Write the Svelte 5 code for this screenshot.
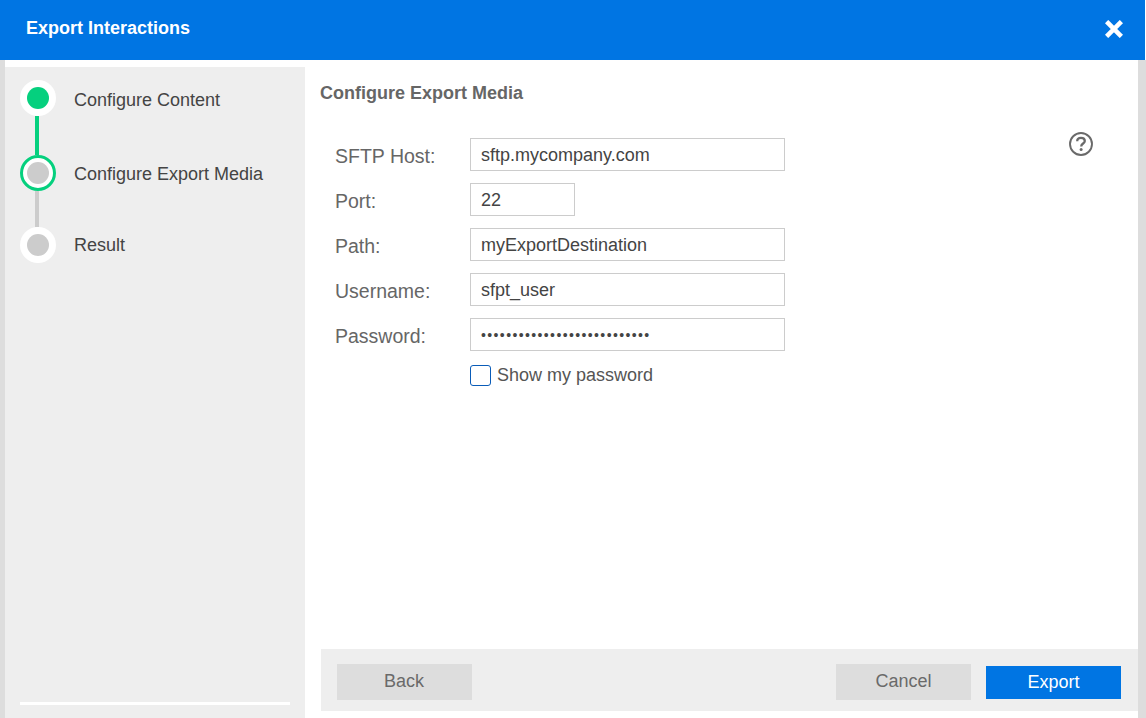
<script>
  const fields = [
    { label: 'SFTP Host:', value: 'sftp.mycompany.com', type: 'text' },
    { label: 'Port:', value: '22', type: 'text', short: true },
    { label: 'Path:', value: 'myExportDestination', type: 'text' },
    { label: 'Username:', value: 'sfpt_user', type: 'text' },
    { label: 'Password:', value: '•••••••••••••••••••••••••••', type: 'text', pw: true }
  ];
</script>

<div class="dialog">
  <header class="head">
    <h1>Export Interactions</h1>
    <svg class="close" width="18" height="18" viewBox="0 0 18 18" aria-label="Close">
      <path d="M3.2 3.2 L14.8 14.8 M14.8 3.2 L3.2 14.8" stroke="#fff" stroke-width="4.6" stroke-linecap="square" fill="none" />
    </svg>
  </header>
  <div class="body">
    <aside class="side">
      <ol class="steps">
        <li class="step">
          <span class="dot done"><i></i></span>
          <span class="name">Configure Content</span>
          <span class="line green"></span>
        </li>
        <li class="step">
          <span class="dot current"><i></i></span>
          <span class="name">Configure Export Media</span>
          <span class="line"></span>
        </li>
        <li class="step">
          <span class="dot"><i></i></span>
          <span class="name">Result</span>
        </li>
      </ol>
      <div class="rule"></div>
    </aside>
    <main class="main">
      <div class="content">
        <h2>Configure Export Media</h2>
        <div class="formwrap">
          <form class="form">
            {#each fields as f}
              <div class="row">
                <label for={f.label}>{f.label}</label>
                <input id={f.label} class:short={f.short} class:pw={f.pw} type={f.type} value={f.value} />
              </div>
            {/each}
            <label class="check"><span class="box"></span>Show my password</label>
          </form>
          <svg class="help" width="26" height="26" viewBox="0 0 26 26" aria-label="Help">
            <circle cx="13" cy="13" r="11" fill="none" stroke="#6a6a6a" stroke-width="1.9" />
            <path d="M9.2 10.2 C9.2 7.8 11 6.8 13 6.8 C15.2 6.8 16.8 8 16.8 10 C16.8 12.4 13.2 12.6 13.2 15.4" fill="none" stroke="#6a6a6a" stroke-width="2.3" />
            <circle cx="13.1" cy="18.6" r="1.5" fill="#6a6a6a" />
          </svg>
        </div>
      </div>
      <footer class="foot">
        <button class="btn back" type="button">Back</button>
        <div class="right">
          <button class="btn" type="button">Cancel</button>
          <button class="btn primary" type="button">Export</button>
        </div>
      </footer>
    </main>
  </div>
</div>

<style>
  :global(body) { margin: 0; background: #fff; }
  .dialog {
    width: 1146px; height: 718px; overflow: hidden; display: flex; flex-direction: column;
    font-family: "Liberation Sans", Arial, sans-serif; color: #444;
  }
  .head {
    height: 60px; width: 1145px; flex: none; background: #0075e3; color: #fff;
    display: flex; align-items: center; justify-content: space-between;
    padding: 0 22px 0 26px; box-sizing: border-box;
  }
  h1 { margin: 0 0 4px; font-size: 18px; font-weight: 700; }
  .close { margin-bottom: 3px; }
  .body {
    flex: 1; min-height: 0; display: flex; box-sizing: border-box;
    border-left: 5px solid #ddd; border-right: 8px solid #ddd; padding-top: 7px;
  }
  .side {
    width: 300px; flex: none; background: #eee; box-sizing: border-box;
    padding: 13px 15px 13px; display: flex; flex-direction: column; justify-content: space-between;
  }
  .steps { list-style: none; margin: 0; padding: 0; }
  .step { position: relative; height: 75px; display: flex; align-items: flex-start; }
  .step:nth-child(2) { height: 72px; }
  .dot {
    width: 36px; height: 36px; border-radius: 50%; background: #fff; flex: none;
    display: flex; align-items: center; justify-content: center; box-sizing: border-box;
    position: relative; z-index: 1;
  }
  .dot i { width: 22px; height: 22px; border-radius: 50%; background: #ccc; display: block; }
  .dot.done i { background: #05d07e; }
  .dot.current { border: 3px solid #05d07e; }
  .name { margin-left: 18px; font-size: 18px; line-height: 22px; margin-top: 9px; color: #444; }
  .step:nth-child(2) .name { margin-top: 8px; }
  .step:nth-child(3) .name { margin-top: 7px; }
  .line { position: absolute; left: 15px; top: 36px; bottom: 0; width: 4px; background: #ccc; }
  .line.green { background: #05d07e; }
  .rule { height: 3px; width: 270px; background: #fff; }
  .main { flex: 1; min-width: 0; display: flex; flex-direction: column; padding: 0 0 7px 16px; }
  .content { flex: 1; min-height: 0; margin-left: -1px; }
  h2 { margin: 16px 0 0; font-size: 18px; line-height: 20px; font-weight: 700; color: #666; }
  .formwrap { display: flex; justify-content: space-between; padding: 35px 44px 0 15px; }
  .form { display: flex; flex-direction: column; gap: 12px; }
  .row { display: flex; align-items: center; height: 33px; }
  .row label { width: 135px; font-size: 19.5px; color: #666; padding-top: 3px; }
  input {
    width: 315px; height: 33px; box-sizing: border-box; border: 1px solid #ccc; background: #fff;
    padding: 1px 9px 0 10px; font: 18px "Liberation Sans", Arial, sans-serif; color: #444; outline: none; border-radius: 0;
  }
  input.short { width: 105px; }
  input.pw { font-size: 14px; letter-spacing: 1.38px; padding-top: 0; }
  .check { display: flex; align-items: center; margin: 0 0 0 135px; font-size: 18px; color: #555; height: 24px; }
  .box {
    width: 21px; height: 21px; box-sizing: border-box; border: 1px solid #0a5cb8; border-radius: 3px;
    margin-right: 6px; background: #fff;
  }
  .help { margin-top: -7px; }
  .foot {
    height: 62px; flex: none; background: #eee; display: flex; justify-content: space-between;
    align-items: center; padding: 0 17px 0 16px; box-sizing: border-box;
  }
  .right { display: flex; gap: 15px; align-items: center; }
  .btn {
    width: 135px; height: 36px; border: 0; background: #ddd; color: #6a6a6a; padding: 0; border-radius: 0;
    font: 18px "Liberation Sans", Arial, sans-serif; margin-top: 3px;
  }
  .back { padding-right: 1px; }
  .primary { background: #0075e3; color: #fff; height: 33px; margin-top: 5px; }
</style>
